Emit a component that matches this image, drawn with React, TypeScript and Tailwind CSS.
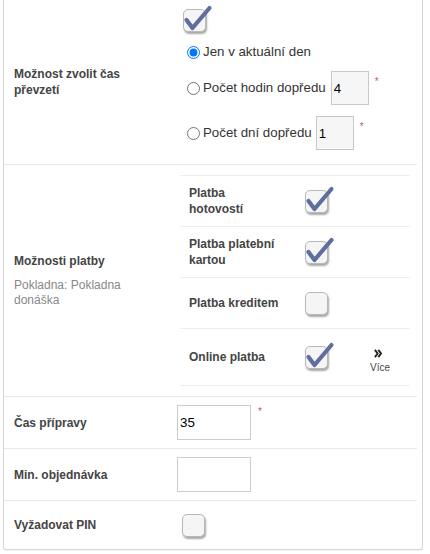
import React from "react";

function Box({ checked }: { checked?: boolean }) {
  return (
    <span className="relative block w-[23px] h-[23px] shrink-0 rounded-[5px] border border-[#b8b8b8] bg-[#f5f5f5] shadow-[1px_2px_2px_rgba(0,0,0,0.35)]">
      {checked && (
        <svg
          className="absolute left-0 top-0 overflow-visible"
          width="23"
          height="23"
          viewBox="0 0 23 23"
          fill="none"
        >
          <path
            d="M2.5 10 L8.5 18 L25.5 -2"
            stroke="#5e6e9f"
            strokeWidth="4.2"
            strokeLinecap="round"
            strokeLinejoin="round"
          />
        </svg>
      )}
    </span>
  );
}

function Star({ className }: { className?: string }) {
  return (
    <span className={"self-start text-[10px] leading-[10px] text-[#d4506a] " + (className ?? "")}>*</span>
  );
}

export default function App() {
  return (
    <div className="bg-white w-[430px] h-[554px] font-['Liberation_Sans',Arial,sans-serif]">
      <div className="ml-[3px] w-[420px] border-x border-b border-[#d6d6d6] rounded-b-[3px] shadow-[0_1px_1px_rgba(0,0,0,0.06)]">
        <div className="mr-[5px]">
          {/* Section 1 */}
          <div className="flex h-[165px] border-b border-[#e8e8e8]">
            <div className="w-[173px] pl-[10px] flex items-center">
              <div className="text-[12px] leading-[16px] font-bold text-[#444]">
                Možnost zvolit čas
                <br />
                převzetí
              </div>
            </div>
            <div className="flex-1 pl-[5px] pt-[9px] text-[13.3px] text-[#333]">
              <div className="ml-[1px]">
                <Box checked />
              </div>
              <label className="mt-[10px] flex items-center h-[20px]">
                <input
                  type="radio"
                  name="cas"
                  defaultChecked
                  className="ml-[5px] mr-[3px] w-[13px] h-[13px] accent-[#0075ff]"
                />
                <span>Jen v aktuální den</span>
              </label>
              <label className="mt-[9px] flex items-center h-[34px]">
                <input type="radio" name="cas" className="ml-[5px] mr-[3px] w-[13px] h-[13px]" />
                <span>Počet hodin dopředu</span>
                <input
                  type="text"
                  defaultValue="4"
                  className="ml-[5px] w-[38px] h-[34px] border border-[#c8c8c8] bg-[#f6f6f6] pl-[2px] text-[13.3px] text-black outline-none"
                />
                <Star className="ml-[6px] mt-[6px]" />
              </label>
              <label className="mt-[11px] flex items-center h-[34px]">
                <input type="radio" name="cas" className="ml-[5px] mr-[3px] w-[13px] h-[13px]" />
                <span>Počet dní dopředu</span>
                <input
                  type="text"
                  defaultValue="1"
                  className="ml-[4px] w-[38px] h-[34px] border border-[#c8c8c8] bg-[#f6f6f6] pl-[2px] text-[13.3px] text-black outline-none"
                />
                <Star className="ml-[6px] mt-[6px]" />
              </label>
            </div>
          </div>

          {/* Section 2 */}
          <div className="flex h-[232px] border-b border-[#e8e8e8]">
            <div className="w-[173px] pl-[10px] flex items-center">
              <div>
                <div className="text-[12px] leading-[16px] font-bold text-[#444]">Možnosti platby</div>
                <div className="mt-[9px] text-[12px] leading-[15px] text-[#888]">
                  Pokladna: Pokladna
                  <br />
                  donáška
                </div>
              </div>
            </div>
            <div className="flex-1 py-[10px] pl-[3px]">
              <div className="w-[230px] border-b border-[#eeeeee] text-[12px] leading-[16px] font-bold text-[#444]">
                {[
                  { l: ["Platba", "hotovostí"], c: true },
                  { l: ["Platba platební", "kartou"], c: true },
                  { l: ["Platba kreditem"], c: false },
                ].map((r, i) => (
                  <div key={i} className="grid grid-cols-[125px_52px_46px] h-[51px] border-t border-[#eeeeee] items-center">
                    <div className="pl-[9px] whitespace-nowrap">
                      {r.l.map((t, j) => (
                        <div key={j}>{t}</div>
                      ))}
                    </div>
                    <div>
                      <Box checked={r.c} />
                    </div>
                    <div />
                  </div>
                ))}
                <div className="grid grid-cols-[125px_52px_46px] h-[57px] border-t border-[#eeeeee] items-center">
                  <div className="pl-[9px] whitespace-nowrap">Online platba</div>
                  <div>
                    <Box checked />
                  </div>
                  <div className="flex flex-col items-center pt-[8px]">
                    <svg width="8" height="9" viewBox="0 0 8 9" fill="none" className="-ml-[4px]">
                      <path d="M0.9 0.9 L3.6 4.5 L0.9 8.1 M4.3 0.9 L7 4.5 L4.3 8.1" stroke="#222" strokeWidth="1.9" />
                    </svg>
                    <span className="mt-[5px] text-[10px] leading-[10px] font-normal text-[#444]">Více</span>
                  </div>
                </div>
              </div>
            </div>
          </div>

          {/* Čas přípravy */}
          <div className="flex h-[52px] border-b border-[#e8e8e8]">
            <div className="w-[173px] pl-[10px] flex items-center text-[12px] font-bold text-[#444]">Čas přípravy</div>
            <div className="flex-1 flex items-center">
              <input
                type="text"
                defaultValue="35"
                className="w-[74px] h-[35px] border border-[#cccccc] bg-white pl-[2px] text-[13.3px] text-black outline-none"
              />
              <Star className="ml-[7px] mt-[10px]" />
            </div>
          </div>

          {/* Min. objednávka */}
          <div className="flex h-[52px] border-b border-[#e8e8e8]">
            <div className="w-[173px] pl-[10px] flex items-center text-[12px] font-bold text-[#444]">Min. objednávka</div>
            <div className="flex-1 flex items-center">
              <input
                type="text"
                defaultValue=""
                className="w-[74px] h-[35px] border border-[#cccccc] bg-white pl-[2px] text-[13.3px] text-black outline-none"
              />
            </div>
          </div>

          {/* Vyžadovat PIN */}
          <div className="flex h-[48px]">
            <div className="w-[173px] pl-[10px] flex items-center text-[12px] font-bold text-[#444]">Vyžadovat PIN</div>
            <div className="flex-1 flex items-center pl-[5px]">
              <Box />
            </div>
          </div>
        </div>
      </div>
    </div>
  );
}
